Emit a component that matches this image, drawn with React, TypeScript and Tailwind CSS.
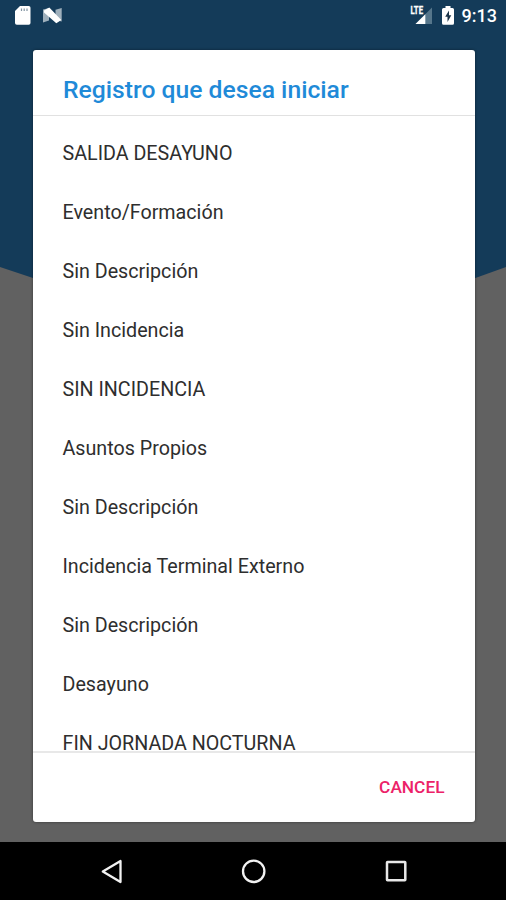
const records = [
  'SALIDA DESAYUNO',
  'Evento/Formación',
  'Sin Descripción',
  'Sin Incidencia',
  'SIN INCIDENCIA',
  'Asuntos Propios',
  'Sin Descripción',
  'Incidencia Terminal Externo',
  'Sin Descripción',
  'Desayuno',
  'FIN JORNADA NOCTURNA',
];

function StatusBar() {
  return (
    <header className="relative flex h-[31px] shrink-0 items-start justify-between">
      <svg width="70" height="31" viewBox="0 0 70 31" aria-hidden="true">
        <path d="M20 6h8.700q1.800 0 1.800 1.800v15.200q0 1.800-1.800 1.800H16.800q-1.800 0-1.800-1.800V11z" fill="#fff" />
        <path d="M21.500 8.500v2.500M24.200 8.500v2.500M27 8.500v2.500" stroke="#8294a2" strokeWidth="1.200" />
        <path d="M43 9.500 49 8V20.500L43 22.500zM61.700 8v13.500L55.500 20V9.800z" fill="#9fb0bc" />
        <path d="M44 10.500 49.300 7.500 61.300 20 56.300 23.300 44 12.500z" fill="#fff" />
      </svg>
      <div className="flex items-start pr-[9px]">
        <svg width="52" height="31" viewBox="0 0 52 31" className="mr-[6px]" aria-hidden="true">
          <path d="M28 7.500V24H11.500z" fill="#56768b" />
          <path d="M21.300 14.200V24H11.500z" fill="#fff" />
          <text x="6.500" y="14" fill="#fff" stroke="#fff" strokeWidth="0.300" fontFamily="Roboto, sans-serif" fontSize="10" fontWeight="700" textLength="12.500" lengthAdjust="spacingAndGlyphs">LTE</text>
          <path d="M41.500 6h5v2h2q1.500 0 1.500 1.500v13.800q0 1.500-1.500 1.500h-9q-1.500 0-1.500-1.500V9.500q0-1.500 1.500-1.500h2z" fill="#fff" />
          <path d="M45 10.500 41.200 16.700h2.300v5.300L47.300 15.300h-2.300z" fill="#1c354a" />
        </svg>
        <span className="mt-[5px] text-[18px] leading-[21px] font-medium text-white">9:13</span>
      </div>
    </header>
  );
}

function NavigationBar() {
  return (
    <nav className="relative grid h-[58px] shrink-0 grid-cols-[183px_142px_1fr] bg-black">
      <button aria-label="Back" className="flex justify-end">
        <svg width="83" height="58" viewBox="0 0 83 58" fill="none">
          <path d="M20.500 19v21L2.800 29.500z" stroke="#f2f2f2" strokeWidth="2.300" strokeLinejoin="round" />
        </svg>
      </button>
      <button aria-label="Home" className="flex justify-center">
        <svg width="58" height="58" viewBox="0 0 58 58" fill="none">
          <circle cx="28.700" cy="29.300" r="10.700" stroke="#f2f2f2" strokeWidth="2.300" />
        </svg>
      </button>
      <button aria-label="Recent apps" className="flex justify-start">
        <svg width="100" height="58" viewBox="0 0 100 58" fill="none">
          <rect x="62" y="20" width="18.300" height="18.300" rx="0.500" stroke="#e8e8e8" strokeWidth="2.500" />
        </svg>
      </button>
    </nav>
  );
}

export default function App() {
  return (
    <div className="relative flex h-[900px] w-[506px] flex-col overflow-hidden bg-[#616161] font-[Roboto,sans-serif]">
      <svg className="absolute inset-0" width="506" height="300" viewBox="0 0 506 300" aria-hidden="true">
        <path d="M0 0H506V267L474 278.500 253 300 33 278 0 267z" fill="#143b59" />
      </svg>
      <StatusBar />
      <main className="relative flex min-h-0 flex-1 flex-col pt-[19px] pr-[31.500px] pb-[20.500px] pl-[32.500px]">
        <section role="dialog" className="flex min-h-0 flex-1 flex-col rounded-[3px] bg-white shadow-[0_0_3px_rgba(0,0,0,0.45)]">
          <h1 className="h-[66px] shrink-0 border-b-[1.500px] border-[#e1e1e1] pt-[25px] pl-[30.500px] text-[24.700px] leading-[30px] font-medium whitespace-nowrap text-[#1f8ad8]">
            Registro que desea iniciar
          </h1>
          <ul className="h-[635px] shrink-0 overflow-hidden pt-[8px]">
            {records.map((record, index) => (
              <li key={index} className="flex h-[59.050px] items-center pl-[30px] text-[19.700px] whitespace-nowrap text-[#2e2e2e]">
                {record}
              </li>
            ))}
          </ul>
          <footer className="flex flex-1 items-center justify-end border-t-2 border-[#e8e8e8] pt-[1.500px] pr-[30px]">
            <button className="text-[17.300px] font-medium text-[#ec2268]">CANCEL</button>
          </footer>
        </section>
      </main>
      <NavigationBar />
    </div>
  );
}
